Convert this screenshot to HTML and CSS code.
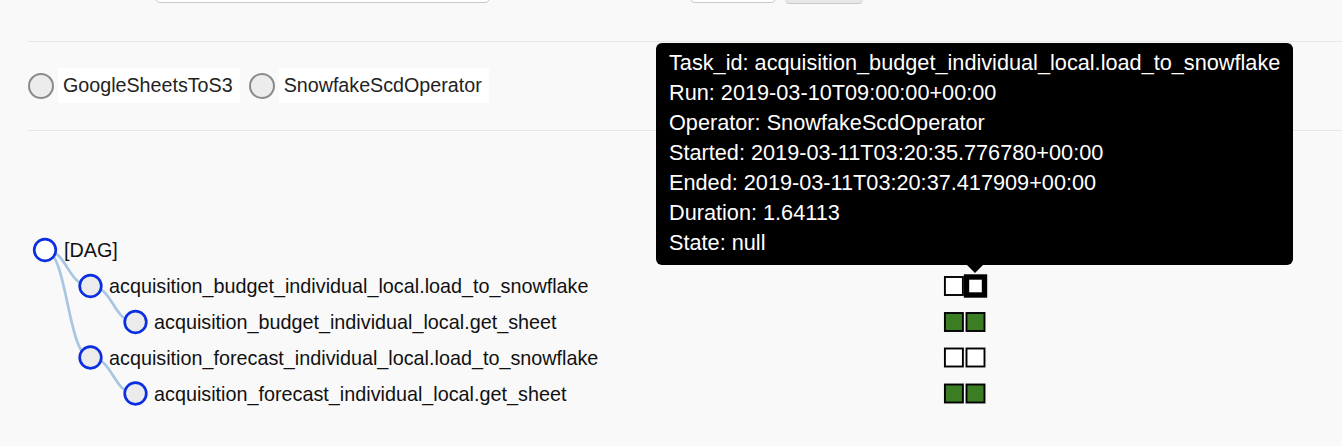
FILE: index.html
```html
<!DOCTYPE html>
<html>
<head>
<meta charset="utf-8">
<link rel="stylesheet" href="styles.css">
</head>
<body>
<div class="toolbar">
  <div class="field"></div>
  <div class="field small"></div>
  <div class="btn"></div>
</div>
<div class="content">
  <div class="rule"></div>
  <div class="legend">
    <span class="legend-circle"></span><span class="legend-item">GoogleSheetsToS3</span>
    <span class="legend-circle"></span><span class="legend-item">SnowfakeScdOperator</span>
  </div>
  <div class="rule"></div>
</div>
<svg class="tree" width="1342" height="315" viewBox="0 131 1342 315">
  <g class="links">
    <path d="M45,250 C67.5,250 67.5,286 90.5,286"/>
    <path d="M90.5,286 C113,286 113,322 135.5,322"/>
    <path d="M45,250 C67.5,250 67.5,357.5 90.5,357.5"/>
    <path d="M90.5,357.5 C113,357.5 113,393.5 135.5,393.5"/>
  </g>
  <g class="nodes">
    <circle class="dag" cx="45" cy="250" r="10.8"/>
    <text x="64" y="257">[DAG]</text>
    <circle cx="90.5" cy="286" r="10.8"/>
    <text x="109" y="293">acquisition_budget_individual_local.load_to_snowflake</text>
    <circle cx="135.5" cy="322" r="10.8"/>
    <text x="154" y="329">acquisition_budget_individual_local.get_sheet</text>
    <circle cx="90.5" cy="357.5" r="10.8"/>
    <text x="109" y="364.5">acquisition_forecast_individual_local.load_to_snowflake</text>
    <circle cx="135.5" cy="393.5" r="10.8"/>
    <text x="154" y="400.5">acquisition_forecast_individual_local.get_sheet</text>
  </g>
  <g class="squares">
    <rect class="none" x="944.9" y="277" width="18" height="18"/>
    <rect class="none hover" x="966.5" y="277" width="18" height="18"/>
    <rect class="success" x="944.9" y="313" width="18" height="18"/>
    <rect class="success" x="966.5" y="313" width="18" height="18"/>
    <rect class="none" x="944.9" y="348.5" width="18" height="18"/>
    <rect class="none" x="966.5" y="348.5" width="18" height="18"/>
    <rect class="success" x="944.9" y="384.5" width="18" height="18"/>
    <rect class="success" x="966.5" y="384.5" width="18" height="18"/>
  </g>
</svg>
<div class="tooltip">
  <div>Task_id: acquisition_budget_individual_local.load_to_snowflake</div>
  <div>Run: 2019-03-10T09:00:00+00:00</div>
  <div>Operator: SnowfakeScdOperator</div>
  <div>Started: 2019-03-11T03:20:35.776780+00:00</div>
  <div>Ended: 2019-03-11T03:20:37.417909+00:00</div>
  <div>Duration: 1.64113</div>
  <div>State: null</div>
</div>
</body>
</html>
```
FILE: styles.css
```css
html, body {
  margin: 0;
  padding: 0;
  background: #f9f9f9;
  font-family: "Liberation Sans", Arial, sans-serif;
  color: #222;
  overflow: hidden;
}
body {
  position: relative;
  width: 1342px;
  height: 446px;
}
.toolbar {
  height: 4px;
  overflow: hidden;
  display: flex;
  align-items: flex-end;
}
.field {
  margin-left: 155px;
  width: 333px;
  height: 30px;
  margin-bottom: 1px;
  background: #fff;
  border: 1px solid #c8c8c8;
  border-radius: 5px;
  flex: none;
}
.field.small {
  margin-left: 200px;
  width: 84px;
}
.btn {
  margin-left: 10px;
  width: 76px;
  height: 30px;
  margin-bottom: 1px;
  background: #e8e8e8;
  border-radius: 4px;
  box-shadow: 0 1px 2px rgba(0,0,0,0.25);
  flex: none;
}
.content {
  padding-left: 28px;
}
.rule {
  border-top: 1px solid #e6e6e6;
}
.content .rule:first-child {
  margin-top: 37px;
}
.legend {
  display: flex;
  align-items: center;
  padding-top: 26px;
  margin-bottom: 27px;
  height: 35px;
}
.legend-circle {
  width: 22px;
  height: 22px;
  border: 2px solid #8a8a8a;
  border-radius: 50%;
  background: #ececec;
  flex: none;
}
.legend-item {
  margin-left: 4px;
  margin-right: 9px;
  background: #fff;
  height: 35px;
  line-height: 35px;
  padding: 0 7px 0 5px;
  font-size: 19.7px;
  color: #222;
}
.tree {
  display: block;
}
.links path {
  fill: none;
  stroke: #a8c5e2;
  stroke-width: 2.7px;
}
.nodes circle {
  fill: #ebebeb;
  stroke: #0b2fe0;
  stroke-width: 2.7px;
}
.nodes circle.dag {
  fill: #fff;
}
.nodes text {
  font-family: "Liberation Sans", Arial, sans-serif;
  font-size: 19.8px;
  fill: #111;
}
.squares rect {
  stroke: #000;
  stroke-width: 1.9px;
}
.squares rect.none {
  fill: #fff;
}
.squares rect.hover {
  stroke-width: 5.4px;
}
.squares rect.success {
  fill: #3b7d23;
}
.tooltip {
  position: absolute;
  left: 656px;
  top: 43px;
  background: #000;
  color: #fff;
  border-radius: 6px;
  padding: 5px 13px 7px;
  font-size: 21.7px;
  line-height: 30px;
  white-space: nowrap;
}
.tooltip::after {
  content: "";
  position: absolute;
  left: 311px;
  bottom: -8px;
  border-left: 8px solid transparent;
  border-right: 8px solid transparent;
  border-top: 8px solid #000;
}
```
